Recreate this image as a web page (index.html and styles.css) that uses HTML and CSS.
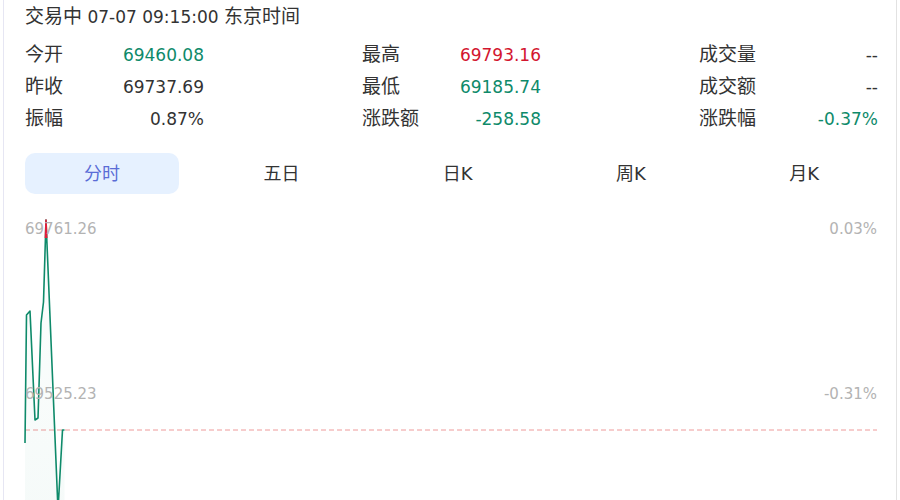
FILE: index.html
```html
<!DOCTYPE html>
<html lang="zh-CN">
<head>
<meta charset="UTF-8">
<meta name="viewport" content="width=device-width, initial-scale=1.0">
<title>日经225 分时</title>
<link rel="stylesheet" href="styles.css">
</head>
<body>

<div class="panel">
    <!-- 交易状态 -->
    <div class="status"><span class="cn">交易中</span> 07-07 09:15:00 <span class="cn">东京时间</span></div>

    <!-- 行情数据 -->
    <div class="stats">
        <div class="stat"><span class="label">今开</span><span class="value down">69460.08</span></div>
        <div class="stat"><span class="label">最高</span><span class="value up">69793.16</span></div>
        <div class="stat"><span class="label">成交量</span><span class="value">--</span></div>

        <div class="stat"><span class="label">昨收</span><span class="value">69737.69</span></div>
        <div class="stat"><span class="label">最低</span><span class="value down">69185.74</span></div>
        <div class="stat"><span class="label">成交额</span><span class="value">--</span></div>

        <div class="stat"><span class="label">振幅</span><span class="value">0.87%</span></div>
        <div class="stat"><span class="label">涨跌额</span><span class="value down">-258.58</span></div>
        <div class="stat"><span class="label">涨跌幅</span><span class="value down">-0.37%</span></div>
    </div>

    <!-- 周期切换 -->
    <div class="tabs">
        <div class="tab active">分时</div>
        <div class="tab">五日</div>
        <div class="tab">日K</div>
        <div class="tab">周K</div>
        <div class="tab">月K</div>
    </div>

    <!-- 分时图 -->
    <div class="chart">
        <svg width="852" height="290" viewBox="0 0 852 290">
            <defs>
                <linearGradient id="areaFill" x1="0" y1="0" x2="0" y2="1">
                    <stop offset="0" stop-color="#0e8a6a" stop-opacity="0.01"/>
                    <stop offset="1" stop-color="#0e8a6a" stop-opacity="0.04"/>
                </linearGradient>
                <clipPath id="aboveHigh">
                    <rect x="0" y="0" width="852" height="28"/>
                </clipPath>
            </defs>

            <!-- 昨收基准线 -->
            <line x1="0" y1="220" x2="852" y2="220" stroke="#ee9a9a" stroke-width="1" stroke-dasharray="5 3"/>

            <polygon points="0,233 1.5,105 5,101 10,210 13,208 16,113 18.5,92 21,10 33,300 38,220 39.5,220 39.5,290 0,290" fill="url(#areaFill)"/>
            <polyline class="price" points="0,233 1.5,105 5,101 10,210 13,208 16,113 18.5,92 21,10 33,300 37.5,220 39.5,220" stroke="#0e8a6a"/>
            <polyline class="price" points="0,233 1.5,105 5,101 10,210 13,208 16,113 18.5,92 21,10 33,300 37.5,220 39.5,220" stroke="#e0203a" clip-path="url(#aboveHigh)"/>

            <text class="axis" x="0" y="24">69761.26</text>
            <text class="axis" x="0" y="189">69525.23</text>
            <text class="axis" x="852" y="24" text-anchor="end">0.03%</text>
            <text class="axis" x="852" y="189" text-anchor="end">-0.31%</text>
        </svg>
    </div>
</div>

</body>
</html>
```

FILE: styles.css
```css
body {
    margin: 0;
    background-color: #fff;
    font-family: "DejaVu Sans", "Noto Sans CJK SC", sans-serif;
    font-size: 17px;
    color: #333;
}

.panel {
    margin: 0 3px;
    height: 500px;
    overflow: hidden;
    padding: 4px 18px 0 21px;
    border-left: 1px solid #e6e6f3;
    border-right: 1px solid #e2e2e2;
}

.status {
    height: 24px;
    line-height: 24px;
    white-space: nowrap;
}

.cn {
    font-size: 19px;
}

.stats {
    display: grid;
    grid-template-columns: repeat(3, 179px);
    grid-auto-rows: 32px;
    justify-content: space-between;
    margin-top: 11px;
}

.stat {
    display: flex;
    justify-content: space-between;
    align-items: center;
}

.label {
    font-size: 19px;
    line-height: 1;
    margin-top: -2px;
}

.value {
    line-height: 1;
}

.value.up {
    color: #d3162f;
}

.value.down {
    color: #0e8a6a;
}

/* 周期切换 */
.tabs {
    display: flex;
    justify-content: space-between;
    margin-top: 18px;
}

.tab {
    height: 41px;
    line-height: 41px;
    padding: 0 59px;
    border-radius: 10px;
    font-size: 18px;
    white-space: nowrap;
}

.tab.active {
    background-color: #e6f1ff;
    color: #5a6cd6;
}

.chart {
    margin-top: 16px;
}

.chart svg {
    display: block;
    overflow: visible;
}

.price {
    fill: none;
    stroke-width: 1.6;
    stroke-linejoin: round;
}

.axis {
    font-family: "DejaVu Sans", sans-serif;
    font-size: 15px;
    fill: #b3b3b3;
}
```
